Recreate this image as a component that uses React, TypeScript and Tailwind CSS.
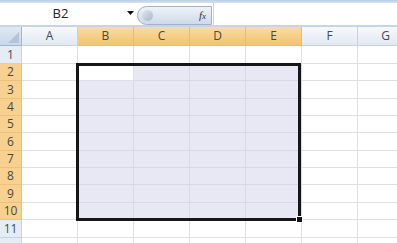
import React from "react";

const cols = ["A", "B", "C", "D", "E", "F", "G"];
const rowHeights = [18, 17, 18, 17, 17, 18, 17, 17, 18, 17, 18, 18];

export default function App() {
  return (
    <div
      className="relative w-[397px] h-[243px] overflow-hidden bg-white"
      style={{ fontFamily: "'Open Sans', 'Liberation Sans', sans-serif" }}
    >
      {/* top strip */}
      <div className="h-[3px] bg-gradient-to-b from-[#b9cde4] to-[#d6e3f2]" />
      {/* formula bar */}
      <div className="flex h-[22px] bg-white">
        <div className="relative flex w-[137px] items-center justify-center">
          <span className="text-[13px] text-[#222] ml-[-16px]">B2</span>
          <svg className="absolute left-[127px] top-[8px]" width="7" height="5" viewBox="0 0 7 5">
            <path d="M0 0 L7 0 L3.5 4 Z" fill="#111" />
          </svg>
        </div>
        <div className="mt-[3px] h-[19px] w-[75px] rounded-l-full border border-[#9fb3cc] bg-gradient-to-b from-[#eef3f9] to-[#cfdae8] flex items-center justify-between pl-[4px] pr-[5px]">
          <div className="h-[11px] w-[11px] rounded-full bg-gradient-to-br from-[#dfe6ef] to-[#aab8c9]" />
          <span className="text-[11px] italic text-[#333]" style={{ fontFamily: "'Liberation Serif', serif" }}>
            f<span className="text-[9px]">x</span>
          </span>
        </div>
        <div className="ml-[1px] flex-1 border-l border-[#c9d5e3] bg-white" />
      </div>
      <div className="h-[2px] bg-[#c7d4e4]" />

      {/* grid */}
      <div className="grid grid-cols-[22px_repeat(7,56px)]">
        {/* header row */}
        <div className="relative h-[19px] border-r border-b border-[#9eb6ce] bg-gradient-to-b from-[#dfe8f4] to-[#c9d8ea]">
          <svg className="absolute right-[2px] bottom-[2px]" width="11" height="11" viewBox="0 0 11 11">
            <path d="M11 0 L11 11 L0 11 Z" fill="#b4c3d6" />
          </svg>
        </div>
        {cols.map((c) => {
          const sel = c === "B" || c === "C" || c === "D" || c === "E";
          return (
            <div
              key={c}
              className={
                sel
                  ? "flex h-[19px] items-center justify-center border-r border-b border-[#f1b865] bg-gradient-to-b from-[#f9dba4] to-[#f2c46c] text-[12px] text-[#4a4a3a]"
                  : "flex h-[19px] items-center justify-center border-r border-b border-[#c5d2e2] bg-gradient-to-b from-[#f7f9fc] to-[#e2e9f2] text-[12px] text-[#3d4b5c]"
              }
            >
              {c}
            </div>
          );
        })}
        {rowHeights.map((h, i) => {
          const r = i + 1;
          const rowSel = r >= 2 && r <= 10;
          return (
            <React.Fragment key={r}>
              <div
                style={{ height: h }}
                className={
                  rowSel
                    ? "flex items-center justify-center border-r border-b border-[#f0c078] bg-[#f8d190] text-[12px] text-[#4a4a3a]"
                    : "flex items-center justify-center border-r border-b border-[#c5d2e2] bg-[#e6ecf4] text-[12px] text-[#3d4b5c]"
                }
              >
                {r <= 11 ? r : ""}
              </div>
              {cols.map((c, ci) => {
                const inSel = rowSel && ci >= 1 && ci <= 4;
                const active = r === 2 && c === "B";
                return (
                  <div
                    key={c}
                    style={{ height: h }}
                    className={
                      inSel && !active
                        ? "border-r border-b border-[#d6d9e6] bg-[#e7e8f4]"
                        : "border-r border-b border-[#dde0e4] bg-white"
                    }
                  />
                );
              })}
            </React.Fragment>
          );
        })}
      </div>

      {/* selection outline */}
      <div className="absolute left-[76px] top-[63px] h-[158px] w-[225px] border-[3px] border-[#161616]" />
      {/* fill handle */}
      <div className="absolute left-[296px] top-[216px] h-[7px] w-[7px] border border-white bg-[#161616]" />
    </div>
  );
}
